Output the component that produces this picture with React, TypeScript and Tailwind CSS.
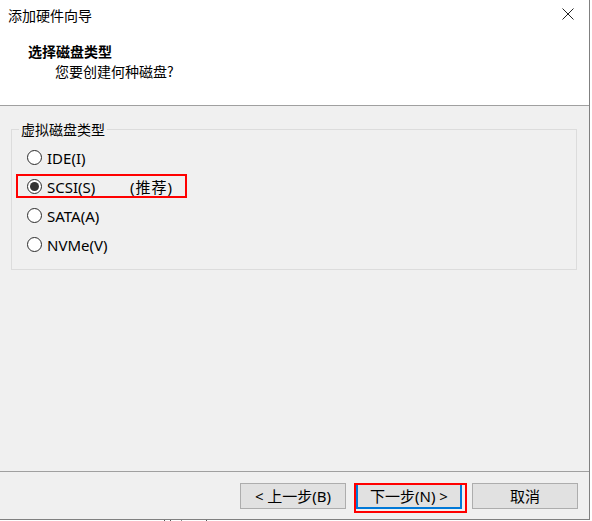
import React from "react";

function Radio({ checked }: { checked?: boolean }) {
  return (
    <span className="w-[15px] h-[15px] rounded-full border border-[#2b2b2b] bg-white flex items-center justify-center shrink-0">
      {checked && <span className="w-[9px] h-[9px] rounded-full bg-[#333333]" />}
    </span>
  );
}

function Row({ label, checked, extra }: { label: string; checked?: boolean; extra?: string }) {
  return (
    <div className="h-[29px] flex items-center pl-[15px] gap-[5px] text-[15px]">
      <Radio checked={checked} />
      {extra ? (
        <span className="flex items-center">
          <span className="inline-block w-[83px]">{label}</span>
          <span className="tracking-[1px]">{extra}</span>
        </span>
      ) : (
        <span>{label}</span>
      )}
    </div>
  );
}

export default function App() {
  return (
    <div className="w-[592px] h-[521px] bg-white overflow-hidden text-[14px] leading-[20px] text-black font-['Noto_Sans','Noto_Sans_CJK_SC',sans-serif]">
      <div className="w-[590px] h-[520px] flex flex-col border-r border-b border-[#808080]">
        {/* header */}
        <div className="h-[106px] shrink-0 bg-white border-b border-[#a0a0a0] flex flex-col">
          <div className="h-[30px] flex items-center justify-between pl-[8px] pr-[15px]">
            <span className="font-['Noto_Sans_CJK_SC',sans-serif]">添加硬件向导</span>
            <svg width="12" height="12" viewBox="0 0 12 12" className="mt-[-2px]">
              <path d="M0.5 0.5 L11.5 11.5 M11.5 0.5 L0.5 11.5" stroke="#222" strokeWidth="1" fill="none" />
            </svg>
          </div>
          <div className="pl-[28px] mt-[11px] font-bold font-['Noto_Sans_CJK_SC',sans-serif]">选择磁盘类型</div>
          <div className="pl-[55px] font-['Noto_Sans_CJK_SC',sans-serif]">您要创建何种磁盘?</div>
        </div>

        {/* body */}
        <div className="flex-1 bg-[#f0f0f0]">
          <fieldset className="mt-[13px] ml-[11px] w-[566px] border border-[#dcdcdc] px-0 pb-[10px]">
            <legend className="ml-[7px] px-[2px] font-['Noto_Sans_CJK_SC',sans-serif]">虚拟磁盘类型</legend>
            <div className="mt-[4px] flex flex-col">
              <Row label="IDE(I)" />
              <div className="relative">
                <Row label="SCSI(S)" checked extra="(推荐)" />
                <span className="absolute left-[4px] top-[2px] w-[171px] h-[24px] border-2 border-[#ff0000]" />
              </div>
              <Row label="SATA(A)" />
              <Row label="NVMe(V)" />
            </div>
          </fieldset>
        </div>

        {/* footer */}
        <div className="h-[48px] shrink-0 bg-[#f0f0f0] border-t border-[#a0a0a0] flex justify-end items-start pt-[11px] pr-[11px] gap-[10px] text-[15px]">
          <button className="w-[106px] h-[26px] bg-[#e1e1e1] border border-[#adadad] flex items-center justify-center">
            &lt; 上一步(B)
          </button>
          <div className="relative">
            <button className="w-[106px] h-[26px] bg-[#e1e1e1] border-2 border-[#0078d7] flex items-center justify-center">
              下一步(N) &gt;
            </button>
            <span className="absolute left-[-2px] top-0 w-[113px] h-[30px] border-2 border-[#ff0000]" />
          </div>
          <button className="w-[106px] h-[26px] bg-[#e1e1e1] border border-[#adadad] flex items-center justify-center">
            取消
          </button>
        </div>
      </div>
      <div className="h-[1px] relative">
        <span className="absolute left-[164px] top-0 w-[1px] h-[1px] bg-[#555]" />
        <span className="absolute left-[170px] top-0 w-[1px] h-[1px] bg-[#555]" />
        <span className="absolute left-[181px] top-0 w-[1px] h-[1px] bg-[#888]" />
        <span className="absolute left-[206px] top-0 w-[1px] h-[1px] bg-[#555]" />
      </div>
    </div>
  );
}
